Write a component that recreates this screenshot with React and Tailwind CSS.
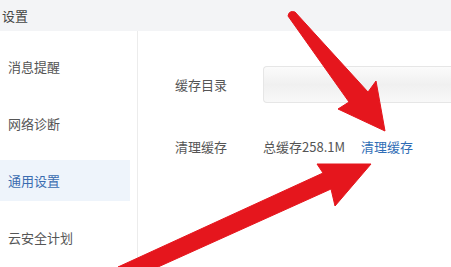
const font = { fontFamily: '"Noto Sans CJK SC", "Noto Sans", sans-serif' };

const menu = ["消息提醒", "网络诊断", "通用设置", "云安全计划"];

function Arrows() {
  return (
    <svg className="absolute inset-0 pointer-events-none" width="451" height="267" viewBox="0 0 451 267">
      <path
        d="M288 16 Q289 10 295 12 L368 92 L376 81 L385 131 L338 109 L349 102 Z"
        fill="#e5161d"
        stroke="#e5161d"
        strokeWidth="1"
        strokeLinejoin="round"
      />
      <path
        d="M118 267 L323 173 L317 164 L371 164 L335 206 L331 189 L158 267 Z"
        fill="#e5161d"
        stroke="#e5161d"
        strokeWidth="1"
        strokeLinejoin="round"
      />
    </svg>
  );
}

export default function App() {
  return (
    <div className="relative w-[451px] h-[267px] overflow-hidden bg-white text-[13px] text-[#555]" style={font}>
      {/* HEADER */}
      <div className="h-[31px] bg-[#f3f4f6] flex items-center pl-[2px] text-[#444]">设置</div>

      <div className="flex h-[236px]">
        {/* SIDEBAR */}
        <div className="w-[138px] shrink-0 border-r border-[#ececec] pr-[7px] pt-[15px] flex flex-col gap-[16px]">
          {menu.map((m) => (
            <div
              key={m}
              className={`h-[41px] flex items-center pl-[8px] ${m === "通用设置" ? "bg-[#eef4fb] text-[#3a6cb0]" : ""}`}
            >
              {m}
            </div>
          ))}
        </div>

        {/* CONTENT */}
        <div className="flex-1 pl-[37px] pt-[35px]">
          <div className="flex items-center h-[37px]">
            <div className="w-[88px] shrink-0">缓存目录</div>
            <div className="flex-1 h-[37px] rounded-l-[4px] border border-r-0 border-[#e6e6e6] bg-gradient-to-b from-[#fbfbfb] via-[#f0f0f0] to-[#f8f8f8]" />
          </div>
          <div className="flex items-center h-[26px] mt-[31px]">
            <div className="w-[88px] shrink-0">清理缓存</div>
            <div className="w-[98px] shrink-0">总缓存258.1M</div>
            <div className="text-[#2f6db5]">清理缓存</div>
          </div>
        </div>
      </div>

      <Arrows />
    </div>
  );
}
